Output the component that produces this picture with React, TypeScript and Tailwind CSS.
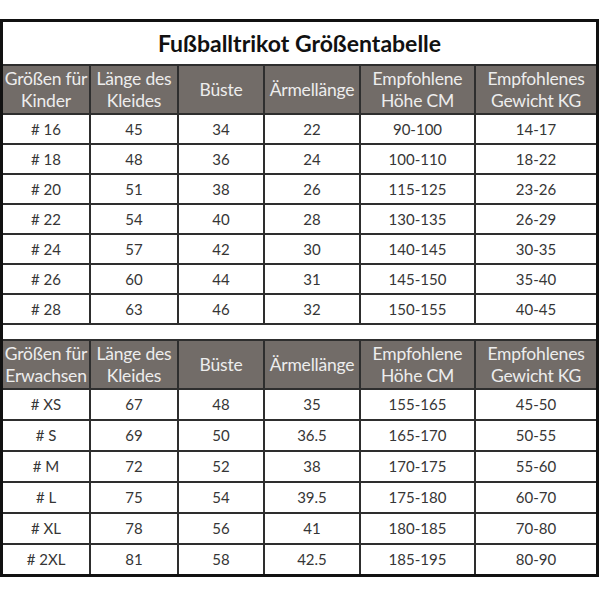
const kids = [
  ["# 16", "45", "34", "22", "90-100", "14-17"],
  ["# 18", "48", "36", "24", "100-110", "18-22"],
  ["# 20", "51", "38", "26", "115-125", "23-26"],
  ["# 22", "54", "40", "28", "130-135", "26-29"],
  ["# 24", "57", "42", "30", "140-145", "30-35"],
  ["# 26", "60", "44", "31", "145-150", "35-40"],
  ["# 28", "63", "46", "32", "150-155", "40-45"],
];

const adults = [
  ["# XS", "67", "48", "35", "155-165", "45-50"],
  ["# S", "69", "50", "36.5", "165-170", "50-55"],
  ["# M", "72", "52", "38", "170-175", "55-60"],
  ["# L", "75", "54", "39.5", "175-180", "60-70"],
  ["# XL", "78", "56", "41", "180-185", "70-80"],
  ["# 2XL", "81", "58", "42.5", "185-195", "80-90"],
];

function HeaderRow({ first }: { first: string }) {
  const labels = [
    ["Größen für", first],
    ["Länge des", "Kleides"],
    ["Büste"],
    ["Ärmellänge"],
    ["Empfohlene", "Höhe CM"],
    ["Empfohlenes", "Gewicht KG"],
  ];
  return (
    <>
      {labels.map((lines, i) => (
        <div
          key={i}
          className="flex h-[47px] flex-col items-center justify-center bg-[#726c68] text-[17.5px] leading-[22px] tracking-[-0.2px] text-[#ededed] whitespace-nowrap"
        >
          {lines.map((l) => (
            <span key={l}>{l}</span>
          ))}
        </div>
      ))}
    </>
  );
}

function DataRows({ rows, height }: { rows: string[][]; height: string }) {
  return (
    <>
      {rows.map((row) =>
        row.map((cell, i) => (
          <div
            key={row[0] + i}
            className={`flex items-center justify-center bg-white text-[15px] text-[#363636] ${height}`}
          >
            {cell}
          </div>
        ))
      )}
    </>
  );
}

export default function App() {
  return (
    <div className="h-[600px] w-[600px] bg-white pt-[19px] font-['Lato','Open_Sans',sans-serif]">
      <div className="grid w-[599px] grid-cols-[86px_86px_84px_94px_113px_120px] gap-[2px] border-[3px] border-[#111] bg-[#2e2e2e]">
        <div className="col-span-6 flex h-[42px] items-center justify-center bg-white text-[23px] font-bold text-[#111]">
          Fußballtrikot Größentabelle
        </div>
        <HeaderRow first="Kinder" />
        <DataRows rows={kids} height="h-[28px]" />
        <div className="col-span-6 h-[14px] bg-white" />
        <HeaderRow first="Erwachsen" />
        <DataRows rows={adults} height="h-[29px]" />
      </div>
    </div>
  );
}
